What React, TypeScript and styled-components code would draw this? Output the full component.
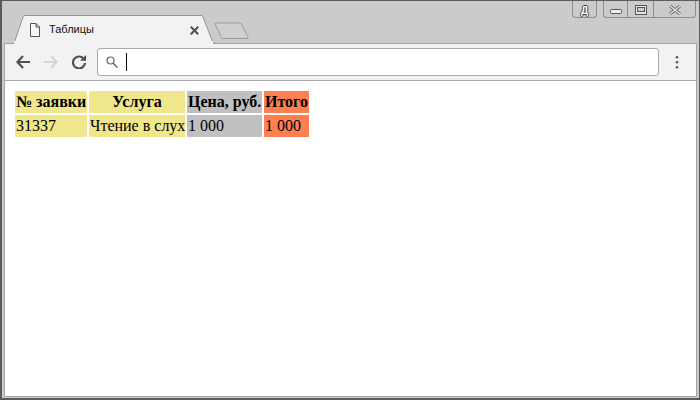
import React from "react";
import styled, { createGlobalStyle } from "styled-components";

const GlobalStyle = createGlobalStyle`
  html, body {
    margin: 0;
    padding: 0;
    height: 100%;
    overflow: hidden;
    background: #fff;
  }
  #root {
    height: 100%;
  }
`;

const Window = styled.div`
  box-sizing: border-box;
  width: 700px;
  height: 400px;
  display: flex;
  flex-direction: column;
  padding: 0 2px 1px 2px;
  background: #cbcbcb;
  border: solid #5c5c5c;
  border-width: 1px 1px 2px 2px;
`;

const TitleBar = styled.div`
  height: 43px;
  flex: none;
  box-sizing: border-box;
  display: flex;
  justify-content: space-between;
  align-items: flex-start;
  padding: 0 1px 0 7px;
  border-bottom: 1px solid #a6a6a6;
`;

const TabStrip = styled.div`
  display: flex;
  align-items: flex-end;
  height: 42px;
`;

const Tab = styled.div`
  position: relative;
  z-index: 1;
  width: 206px;
  height: 29px;
  margin-bottom: -1px;
  display: flex;
  align-items: center;
  box-sizing: border-box;
  padding: 1px 0 0 19px;
`;

const TabShape = styled.svg`
  position: absolute;
  left: 0;
  top: 0;
`;

const TabIcon = styled.svg`
  position: relative;
  flex: none;
`;

const TabTitle = styled.span`
  position: relative;
  width: 141px;
  margin: 0 0 2px 9px;
  font: 11px "Liberation Sans", Arial, sans-serif;
  color: #111;
`;

const NewTab = styled.svg`
  position: relative;
  z-index: 1;
  flex: none;
  margin: 0 0 3px -3px;
`;

const Controls = styled.div`
  display: flex;
  gap: 6px;
`;

const ControlGroup = styled.div`
  display: flex;
  height: 17px;
  box-sizing: border-box;
  border: 1px solid #8c8c8c;
  border-top: none;
  border-radius: 0 0 4px 4px;
`;

const ControlButton = styled.div<{ $w: number; $divider?: boolean }>`
  width: ${(p) => p.$w}px;
  display: flex;
  align-items: center;
  justify-content: center;
  border-left: ${(p) => (p.$divider ? "1px solid #8c8c8c" : "none")};
`;

const LangLetter = styled.span`
  padding-top: 3px;
  font: bold 10px "Liberation Sans", Arial, sans-serif;
  color: #fff;
  text-shadow: 1px 0 #444, -1px 0 #444, 0 1px #444, 0 -1px #444;
`;

const ControlGlyph = styled.svg<{ $top: number }>`
  margin-top: ${(p) => p.$top}px;
`;

const Frame = styled.div`
  flex: 1;
  display: flex;
  flex-direction: column;
  min-height: 0;
  border: solid #a6a6a6;
  border-width: 0 1px 1px 1px;
`;

const Toolbar = styled.div`
  height: 37px;
  flex: none;
  display: flex;
  align-items: center;
  box-sizing: border-box;
  padding: 0 17px 0 11px;
  background: #f2f2f2;
  border-bottom: 1px solid #a9a9a9;
`;

const NavIcon = styled.svg`
  flex: none;
  margin-right: 14px;
`;

const Omnibox = styled.div`
  flex: 1;
  height: 28px;
  box-sizing: border-box;
  margin: 0 16px 0 -3px;
  display: flex;
  align-items: center;
  gap: 8px;
  padding-left: 8px;
  background: #fff;
  border: 1px solid #a9a9a9;
  border-radius: 3px;
`;

const Caret = styled.div`
  width: 1px;
  height: 18px;
  background: #000;
`;

const Page = styled.div`
  flex: 1;
  background: #fff;
  padding: 8px;
`;

const OrderTable = styled.table`
  width: 298px;
  table-layout: fixed;
  font: 16px "Liberation Serif", "Times New Roman", serif;
  color: #000;
  border-spacing: 2px;
`;

const Head = styled.th<{ $bg: string; $w: number }>`
  width: ${(p) => p.$w}px;
  background: ${(p) => p.$bg};
  padding: 2px 1px;
  box-sizing: border-box;
  white-space: nowrap;
`;

const Cell = styled.td<{ $bg: string }>`
  background: ${(p) => p.$bg};
  padding: 2px 1px;
  white-space: nowrap;
`;

const KHAKI = "#f0e68c";
const SILVER = "#c0c0c0";
const CORAL = "#ff7f50";

export default function App() {
  return (
    <Window>
      <GlobalStyle />
      <TitleBar>
        <TabStrip>
          <Tab>
            <TabShape width="206" height="29" viewBox="0 0 206 29">
              <path d="M0 28.500 H1.500 Q3 28.500 3.500 27 L12 2 Q12.500 0.500 14 0.500 H190 Q191.500 0.500 192 2 L201.500 26.500 Q202.500 28.500 204 28.500 H206" fill="#f2f2f2" stroke="#959595" />
              <rect x="3" y="26" width="199" height="3" fill="#f2f2f2" />
            </TabShape>
            <TabIcon width="10" height="14" viewBox="0 0 10 14">
              <path d="M0.500 0.500 H6 L9.500 4 V13.500 H0.500 Z M6 0.500 V4 H9.500" fill="#f8f8f8" stroke="#555" />
            </TabIcon>
            <TabTitle>Таблицы</TabTitle>
            <TabIcon width="9" height="9" viewBox="0 0 9 9">
              <path d="M0.800 0.800 L8.200 8.200 M8.200 0.800 L0.800 8.200" stroke="#4f4f4f" strokeWidth="2" />
            </TabIcon>
          </Tab>
          <NewTab width="36" height="18" viewBox="0 0 36 18">
            <path d="M1 2 Q1 1 2 1 H26 Q27 1 27.500 2 L33.800 14.500 Q34.500 16.500 33 16.500 H9 Q8 16.500 7.500 15.500 Z" fill="#cfcfcf" stroke="#9a9a9a" />
          </NewTab>
        </TabStrip>
        <Controls>
          <ControlGroup>
            <ControlButton $w={23}>
              <LangLetter>Д</LangLetter>
            </ControlButton>
          </ControlGroup>
          <ControlGroup>
            <ControlButton $w={23}>
              <ControlGlyph $top={6} width="12" height="6" viewBox="0 0 12 6">
                <rect x="0.500" y="0.500" width="11" height="4" rx="1" fill="#eee" stroke="#555" />
              </ControlGlyph>
            </ControlButton>
            <ControlButton $w={25} $divider>
              <ControlGlyph $top={1} width="12" height="10" viewBox="0 0 12 10">
                <rect x="0.500" y="0.500" width="11" height="9" fill="#e6e6e6" stroke="#555" />
                <rect x="2.500" y="2.500" width="7" height="4" fill="#cbcbcb" stroke="#555" />
              </ControlGlyph>
            </ControlButton>
            <ControlButton $w={41} $divider>
              <ControlGlyph $top={1} width="12" height="10" viewBox="0 0 12 10">
                <path d="M1 1 L11 9 M11 1 L1 9" stroke="#666" strokeWidth="3" />
                <path d="M1 1 L11 9 M11 1 L1 9" stroke="#eee" strokeWidth="1.200" />
              </ControlGlyph>
            </ControlButton>
          </ControlGroup>
        </Controls>
      </TitleBar>
      <Frame>
        <Toolbar>
          <NavIcon width="14" height="14" viewBox="0 0 14 14">
            <path d="M7 1 L1.500 7 L7 13 M1.500 7 H14" fill="none" stroke="#505050" strokeWidth="2.200" />
          </NavIcon>
          <NavIcon width="14" height="14" viewBox="0 0 14 14">
            <path d="M7 1 L12.500 7 L7 13 M12.500 7 H0" fill="none" stroke="#d4d4d4" strokeWidth="2.200" />
          </NavIcon>
          <NavIcon width="14" height="14" viewBox="0 0 14 14">
            <path d="M11.500 3.500 A6 6 0 1 0 13 8" fill="none" stroke="#505050" strokeWidth="2.200" />
            <path d="M8 5.800 H14 V0 Z" fill="#505050" />
          </NavIcon>
          <Omnibox>
            <svg width="12" height="12" viewBox="0 0 12 12">
              <circle cx="4.500" cy="4.500" r="3.500" fill="none" stroke="#666" strokeWidth="1.200" />
              <path d="M7 7 L11.500 11.500" stroke="#666" strokeWidth="1.500" />
            </svg>
            <Caret />
          </Omnibox>
          <svg width="4" height="14" viewBox="0 0 4 14">
            <circle cx="2" cy="2.300" r="1.300" fill="#5a5a5a" />
            <circle cx="2" cy="7.300" r="1.300" fill="#5a5a5a" />
            <circle cx="2" cy="12.300" r="1.300" fill="#5a5a5a" />
          </svg>
        </Toolbar>
        <Page>
          <OrderTable>
            <thead>
              <tr>
                <Head $bg={KHAKI} $w={72}>№ заявки</Head>
                <Head $bg={KHAKI} $w={96}>Услуга</Head>
                <Head $bg={SILVER} $w={75}>Цена, руб.</Head>
                <Head $bg={CORAL} $w={45}>Итого</Head>
              </tr>
            </thead>
            <tbody>
              <tr>
                <Cell $bg={KHAKI}>31337</Cell>
                <Cell $bg={KHAKI}>Чтение в слух</Cell>
                <Cell $bg={SILVER}>1 000</Cell>
                <Cell $bg={CORAL}>1 000</Cell>
              </tr>
            </tbody>
          </OrderTable>
        </Page>
      </Frame>
    </Window>
  );
}
